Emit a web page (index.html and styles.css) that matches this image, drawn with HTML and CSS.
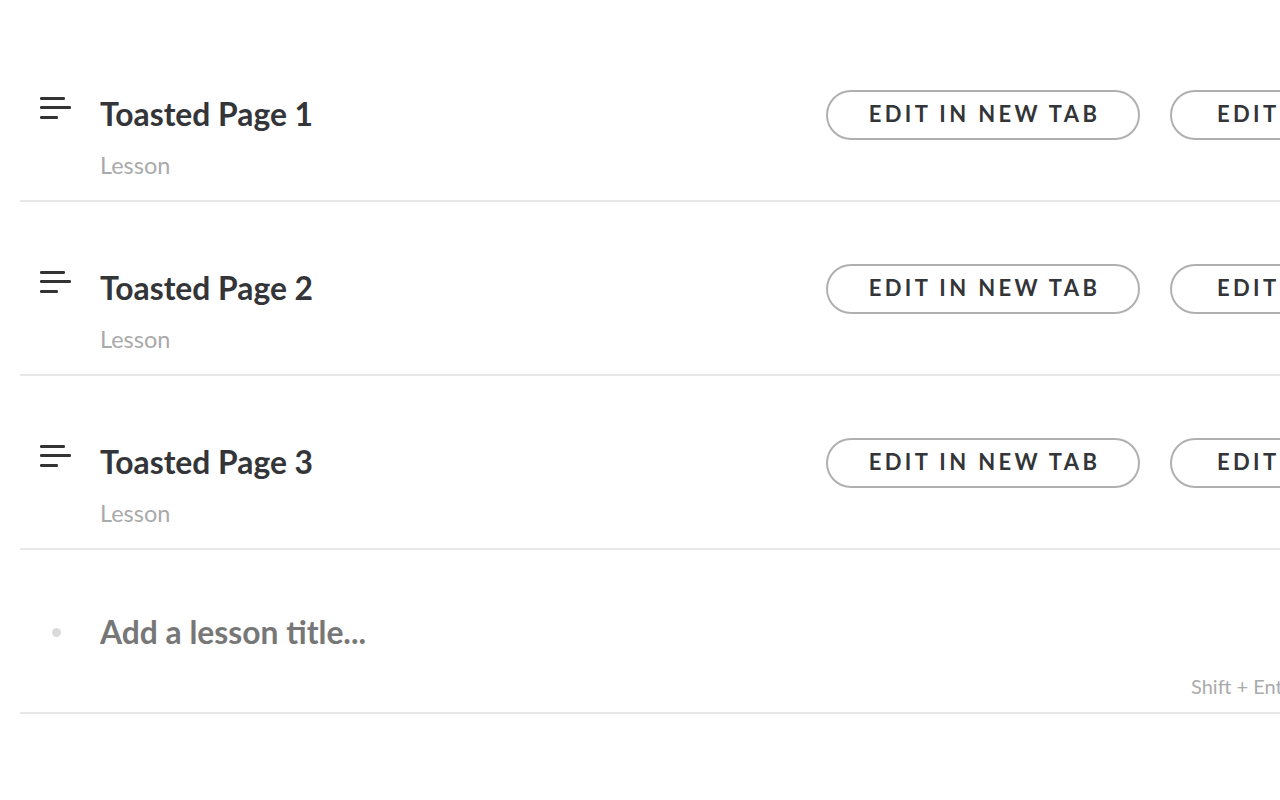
FILE: index.html
```html
<!DOCTYPE html>
<html>
<head>
<meta charset="utf-8">
<link rel="stylesheet" href="styles.css">
</head>
<body>
<div class="list">
  <div class="row">
    <div class="handle">
      <svg width="32" height="26" viewBox="0 0 32 26"><rect x="0" y="2" width="25" height="3" rx="1.2" fill="#333"/><rect x="0" y="11" width="31" height="3" rx="1.2" fill="#333"/><rect x="0" y="21" width="18" height="3" rx="1.2" fill="#333"/></svg>
    </div>
    <div class="info">
      <div class="title">Toasted Page 1</div>
      <div class="sub">Lesson</div>
    </div>
    <div class="actions">
      <button class="btn">EDIT IN NEW TAB</button>
      <button class="btn btn-second">EDIT</button>
    </div>
  </div>
  <div class="row">
    <div class="handle">
      <svg width="32" height="26" viewBox="0 0 32 26"><rect x="0" y="2" width="25" height="3" rx="1.2" fill="#333"/><rect x="0" y="11" width="31" height="3" rx="1.2" fill="#333"/><rect x="0" y="21" width="18" height="3" rx="1.2" fill="#333"/></svg>
    </div>
    <div class="info">
      <div class="title">Toasted Page 2</div>
      <div class="sub">Lesson</div>
    </div>
    <div class="actions">
      <button class="btn">EDIT IN NEW TAB</button>
      <button class="btn btn-second">EDIT</button>
    </div>
  </div>
  <div class="row">
    <div class="handle">
      <svg width="32" height="26" viewBox="0 0 32 26"><rect x="0" y="2" width="25" height="3" rx="1.2" fill="#333"/><rect x="0" y="11" width="31" height="3" rx="1.2" fill="#333"/><rect x="0" y="21" width="18" height="3" rx="1.2" fill="#333"/></svg>
    </div>
    <div class="info">
      <div class="title">Toasted Page 3</div>
      <div class="sub">Lesson</div>
    </div>
    <div class="actions">
      <button class="btn">EDIT IN NEW TAB</button>
      <button class="btn btn-second">EDIT</button>
    </div>
  </div>
  <div class="add-row">
    <div class="add-line">
      <div class="handle dot-wrap"><span class="dot"></span></div>
      <div class="add-title">Add a lesson title...</div>
    </div>
    <div class="hint">Shift + Enter to add</div>
  </div>
</div>
</body>
</html>
```
FILE: styles.css
```css
html, body {
  margin: 0;
  padding: 0;
  background: #fff;
  overflow: hidden;
}
body {
  font-family: Lato, "Noto Sans", sans-serif;
  padding-top: 28px;
}
.list {
  margin-left: 20px;
  width: 1600px;
}
.row {
  display: flex;
  align-items: flex-start;
  padding: 67px 0 21px 20px;
  border-bottom: 2px solid #e8e8e8;
}
.handle {
  width: 32px;
  height: 38px;
  margin-right: 28px;
  flex: none;
}
.handle svg {
  display: block;
}
.info {
  width: 726px;
  flex: none;
}
.title {
  font-size: 31.8px;
  font-weight: 700;
  line-height: 38px;
  color: #333538;
}
.sub {
  margin-top: 18px;
  font-size: 23.5px;
  line-height: 28px;
  color: #aaaaaa;
}
.actions {
  display: flex;
  gap: 31px;
  margin-top: -5px;
}
.btn {
  box-sizing: border-box;
  height: 50px;
  width: 314px;
  border: 2px solid #b0b0b0;
  border-radius: 25px;
  background: #fff;
  font-family: Lato, "Noto Sans", sans-serif;
  font-size: 22px;
  font-weight: 700;
  letter-spacing: 3.35px;
  color: #333538;
  padding: 0 0 3px 3px;
  text-align: center;
}
.btn-second {
  text-align: left;
  padding-left: 45px;
  margin-left: -1px;
}
.add-row {
  padding: 63px 0 14px 20px;
  border-bottom: 2px solid #e8e8e8;
}
.add-line {
  display: flex;
  align-items: center;
}
.dot-wrap {
  display: flex;
  align-items: center;
  justify-content: center;
}
.dot {
  width: 9px;
  height: 9px;
  border-radius: 50%;
  background: #dadada;
}
.add-title {
  font-size: 31.8px;
  font-weight: 700;
  line-height: 38px;
  color: #777777;
}
.hint {
  margin-top: 23px;
  margin-left: 1151px;
  font-size: 20px;
  line-height: 24px;
  color: #aaaaaa;
}
```
